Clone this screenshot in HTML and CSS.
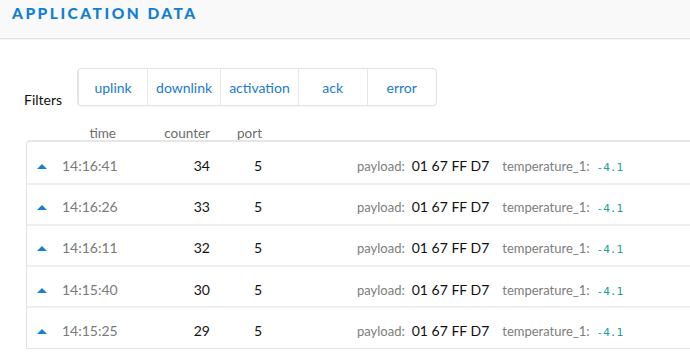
FILE: index.html
```html
<!DOCTYPE html>
<html>
<head>
<meta charset="utf-8">
<link rel="stylesheet" href="styles.css">
</head>
<body>
<header class="topbar">
  <h1 class="title">APPLICATION DATA</h1>
</header>
<main class="content">
  <div class="filters">
    <span class="filters-label">Filters</span>
    <div class="filter-group">
      <button class="filter-btn">uplink</button>
      <button class="filter-btn">downlink</button>
      <button class="filter-btn">activation</button>
      <button class="filter-btn">ack</button>
      <button class="filter-btn">error</button>
    </div>
  </div>
  <div class="col-head">
    <span class="c-arrow"></span>
    <span class="c-time">time</span>
    <span class="c-counter">counter</span>
    <span class="c-port">port</span>
  </div>
  <div class="table">
    <div class="row">
      <span class="c-arrow"><i class="up"></i></span>
      <span class="c-time">14:16:41</span>
      <span class="c-counter">34</span>
      <span class="c-port">5</span>
      <span class="c-payload"><span class="lbl">payload:</span><span class="val">01 67 FF D7</span><span class="lbl field">temperature_1:</span><code class="num">-4.1</code></span>
    </div>
    <div class="row">
      <span class="c-arrow"><i class="up"></i></span>
      <span class="c-time">14:16:26</span>
      <span class="c-counter">33</span>
      <span class="c-port">5</span>
      <span class="c-payload"><span class="lbl">payload:</span><span class="val">01 67 FF D7</span><span class="lbl field">temperature_1:</span><code class="num">-4.1</code></span>
    </div>
    <div class="row">
      <span class="c-arrow"><i class="up"></i></span>
      <span class="c-time">14:16:11</span>
      <span class="c-counter">32</span>
      <span class="c-port">5</span>
      <span class="c-payload"><span class="lbl">payload:</span><span class="val">01 67 FF D7</span><span class="lbl field">temperature_1:</span><code class="num">-4.1</code></span>
    </div>
    <div class="row">
      <span class="c-arrow"><i class="up"></i></span>
      <span class="c-time">14:15:40</span>
      <span class="c-counter">30</span>
      <span class="c-port">5</span>
      <span class="c-payload"><span class="lbl">payload:</span><span class="val">01 67 FF D7</span><span class="lbl field">temperature_1:</span><code class="num">-4.1</code></span>
    </div>
    <div class="row">
      <span class="c-arrow"><i class="up"></i></span>
      <span class="c-time">14:15:25</span>
      <span class="c-counter">29</span>
      <span class="c-port">5</span>
      <span class="c-payload"><span class="lbl">payload:</span><span class="val">01 67 FF D7</span><span class="lbl field">temperature_1:</span><code class="num">-4.1</code></span>
    </div>
  </div>
</main>
</body>
</html>
```
FILE: styles.css
```css
* { box-sizing: border-box; }
html, body {
  margin: 0;
  padding: 0;
  background: #fff;
  overflow: hidden;
  font-family: Lato, "Open Sans", sans-serif;
  color: #222;
}
.topbar {
  height: 39px;
  background: #f9f9f9;
  border-bottom: 1px solid #e2e2e2;
  box-shadow: 0 1px 1px rgba(0,0,0,0.04);
  padding: 0 12px;
  display: flex;
  align-items: center;
}
.title {
  margin: 0;
  margin-top: -12px;
  font-size: 15.5px;
  font-weight: 900;
  letter-spacing: 2.5px;
  color: #0f7fd6;
}
.content {
  padding: 29px 0 0 24px;
  overflow: hidden;
}
.filters {
  display: flex;
  align-items: flex-end;
  gap: 15px;
}
.filters-label {
  font-size: 14px;
  color: #111;
  line-height: 18px;
  margin-bottom: -3px;
}
.filter-group {
  display: flex;
  height: 38px;
  border: 1px solid #e2e2e2;
  border-radius: 4px;
  background: #fff;
  box-shadow: 0 1px 1px rgba(0,0,0,0.03);
}
.filter-btn {
  font-family: inherit;
  font-size: 14px;
  color: #1a7bd0;
  background: transparent;
  border: 0;
  border-left: 1px solid #e6e6e6;
  min-width: 69px;
  padding: 1px 8px 0;
  cursor: pointer;
}
.col-head, .row {
  display: flex;
  align-items: center;
}
.col-head {
  margin: 18px 0 0 3px;
  height: 17px;
  font-size: 13.5px;
  color: #6c6c6c;
}
.c-arrow { width: 35px; display: flex; justify-content: center; padding-left: 1px; }
.c-time { width: 54px; text-align: right; }
.c-counter { width: 94px; text-align: right; }
.c-port { width: 52px; text-align: right; }
.table {
  margin: -1px 0 0 2px;
  width: 720px;
  border: 1px solid #e3e3e3;
  border-top: 2px solid #e6e6e6;
  border-radius: 4px 0 0 0;
}
.row {
  height: 41.25px;
  padding-top: 5px;
  border-top: 2px solid #efefef;
  font-size: 14px;
}
.row:first-child { border-top: 0; height: 40.5px; padding-top: 6px; }
.row .c-time { color: #7a7a7a; }
.row .c-counter, .row .c-port { color: #111; }
.up {
  display: block;
  width: 0;
  height: 0;
  border-left: 5px solid transparent;
  border-right: 5px solid transparent;
  border-bottom: 5px solid #1a7fd3;
  margin-left: -6px;
  margin-top: 2px;
}
.c-payload {
  margin-left: 95px;
  display: flex;
  align-items: baseline;
}
.lbl { font-size: 13px; color: #7d7d7d; }
.val { font-size: 14px; color: #111; margin-left: 7px; }
.field { margin-left: 13px; }
.num {
  font-family: "DejaVu Sans Mono", "Liberation Mono", monospace;
  font-size: 11px;
  color: #1a9e9e;
  margin-left: 7px;
}
```
